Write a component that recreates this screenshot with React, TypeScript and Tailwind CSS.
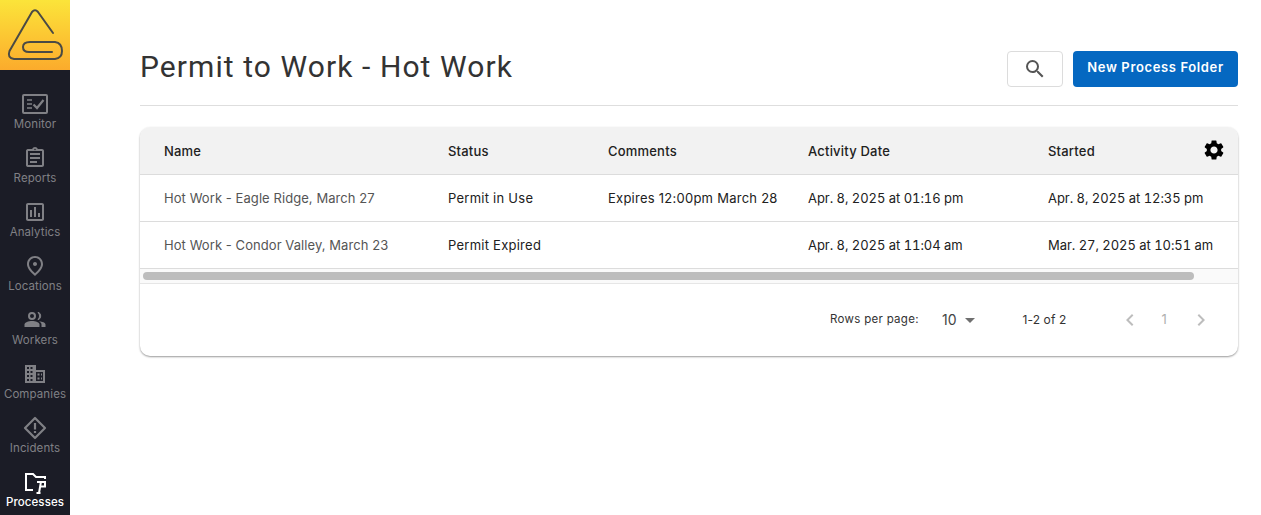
import { MdSettings, MdSearch, MdArrowDropDown, MdChevronLeft, MdChevronRight, MdOutlineAssignment, MdOutlineAssessment, MdOutlinePlace } from "react-icons/md";

const font = "font-['Inter','Roboto',sans-serif]";

function MonitorIcon() {
  return (
    <svg width="26" height="20" viewBox="0 0 26 20" fill="none" stroke="currentColor" className="shrink-0">
      <rect x="1" y="1" width="24" height="18" rx="1" strokeWidth="2" />
      <path d="M5 6h5M5 10h5M5 14h5" strokeWidth="1.6" />
      <path d="M11.5 10.5l3.5 3.5 6.5-8" strokeWidth="2.2" />
    </svg>
  );
}

function WorkersIcon() {
  return (
    <svg width="24" height="24" viewBox="0 0 24 24" fill="currentColor">
      <circle cx="9" cy="8" r="3" fill="none" stroke="currentColor" strokeWidth="2" />
      <path d="M15 4.2a4 4 0 0 1 0 7.6 6 6 0 0 0 0-7.6Z" stroke="currentColor" strokeWidth="1" />
      <path d="M1.5 19v-2.5C1.5 14.5 5.5 13 9 13s7.5 1.500 7.500 3.500V19Z" />
      <path d="M16 13.200c3.500.4 6.500 1.500 6.500 3.300V19h-4v-2.500c0-1.300-1-2.500-2.500-3.300Z" />
    </svg>
  );
}

function CompaniesIcon() {
  return (
    <svg width="24" height="24" viewBox="0 0 24 24" fill="currentColor">
      <path fillRule="evenodd" d="M2 3h11v18H2ZM4 5v2h2V5Zm3.500 0v2h2V5ZM4 9v2h2V9Zm3.500 0v2h2V9ZM4 13v2h2v-2Zm3.500 0v2h2v-2ZM4 17v2h2v-2Zm3.500 0v2h2v-2Z" />
      <path fillRule="evenodd" d="M13 8h9v13h-9v-2h7v-9h-7Z" />
      <path d="M14.500 11.500h2v2h-2ZM14.500 15.500h2v2h-2ZM18 11.500h1v2h-1ZM18 15.500h1v2h-1Z" />
    </svg>
  );
}

function IncidentIcon() {
  return (
    <svg width="24" height="24" viewBox="0 0 24 24" fill="none" stroke="currentColor">
      <path d="M12 2 22 12 12 22 2 12Z" strokeWidth="2.2" strokeLinejoin="round" />
      <path d="M12 7v6.500M12 15v2" strokeWidth="2.2" />
    </svg>
  );
}

function ProcessIcon() {
  return (
    <svg width="24" height="24" viewBox="0 0 24 24" fill="none" stroke="currentColor" strokeWidth="2">
      <path d="M10 20H3V4h7l3 3h9v2" />
      <path d="M14 12h8v4.500h-4.500" />
      <path d="M18 11.500l-2 11.500M13.500 23h4" />
    </svg>
  );
}

const nav = [
  { label: "Monitor", icon: <MonitorIcon /> },
  { label: "Reports", icon: <MdOutlineAssignment size={24} /> },
  { label: "Analytics", icon: <MdOutlineAssessment size={24} /> },
  { label: "Locations", icon: <MdOutlinePlace size={24} /> },
  { label: "Workers", icon: <WorkersIcon /> },
  { label: "Companies", icon: <CompaniesIcon /> },
  { label: "Incidents", icon: <IncidentIcon /> },
  { label: "Processes", icon: <ProcessIcon />, active: true },
];

const rows = [
  ["Hot Work - Eagle Ridge, March 27", "Permit in Use", "Expires 12:00pm March 28", "Apr. 8, 2025 at 01:16 pm", "Apr. 8, 2025 at 12:35 pm"],
  ["Hot Work - Condor Valley, March 23", "Permit Expired", "", "Apr. 8, 2025 at 11:04 am", "Mar. 27, 2025 at 10:51 am"],
];

const cols = "grid grid-cols-[284px_160px_200px_240px_1fr] items-center pl-6 pt-[2px]";

export default function App() {
  return (
    <div className={`${font} flex h-[515px] w-[1261px] overflow-hidden bg-white`}>
      <aside className="w-[70px] shrink-0 bg-[#1b1c26]">
        <div className="h-[70px] bg-gradient-to-b from-[#fbe43a] to-[#fbab2c]">
          <svg width="70" height="70" viewBox="0 0 70 70" fill="none" stroke="#4a4a45" strokeWidth="2" strokeLinecap="round" strokeLinejoin="round">
            <path d="M53 33 38 12Q35 8.500 32 12L9.500 51Q7 58 14 59H55Q62 58 62 51Q62 43 55 42H30Q23 42 23 47Q23 52 29 52H52" />
          </svg>
        </div>
        <nav className="pt-[22px]">
          {nav.map((n) => (
            <div key={n.label} className={`flex h-[54px] flex-col items-center ${n.active ? "text-white" : "text-[#808085]"}`}>
              <div className="flex h-[24px] w-[24px] items-center justify-center">{n.icon}</div>
              <span className={`text-[11.5px] leading-[16px] tracking-[0.1px] ${n.active ? "font-medium" : ""}`}>{n.label}</span>
            </div>
          ))}
        </nav>
      </aside>

      <main className="flex-1 pl-[70px] pr-[23px]">
        <header className="flex h-[106px] items-start justify-between border-b border-[#dedede] pt-[51px]">
          <h1 className="text-[30px] font-normal leading-[32px] tracking-[1.08px] text-[#333333] font-['Roboto',sans-serif]">Permit to Work - Hot Work</h1>
          <div className="flex gap-[10px]">
            <button className="flex h-[36px] w-[56px] items-center justify-center rounded-[4px] border border-[#dcdcdc] text-[#555555]">
              <MdSearch size={24} />
            </button>
            <button className="h-[36px] w-[165px] rounded-[4px] bg-[#0568c1] pb-[2px] text-[13px] font-semibold tracking-[0.63px] text-white">New Process Folder</button>
          </div>
        </header>

        <section className="relative mt-[21px] h-[229px] overflow-hidden rounded-[10px] shadow-[0_1px_2px_rgba(0,0,0,0.4)]">
          <div className={`${cols} h-[48px] border-b border-[#dcdcdc] bg-[#f2f2f2] text-[13px] font-medium tracking-[0.2px] text-[#212121]`}>
            {["Name", "Status", "Comments", "Activity Date", "Started"].map((h) => (
              <div key={h}>{h}</div>
            ))}
          </div>
          <MdSettings size={24} className="absolute right-[12px] top-[11px] text-black" />
          {rows.map((r, i) => (
            <div key={i} className={`${cols} h-[47px] border-b border-[#dcdcdc] text-[13px] tracking-[0.25px] text-[#212121]`}>
              {r.map((c, j) => (
                <div key={j} className={j === 0 ? "tracking-[0.07px] text-[#555555]" : j > 2 ? "tracking-[-0.05px] tabular-nums" : ""}>{c}</div>
              ))}
            </div>
          ))}
          <div className="flex h-[15px] items-center border-b border-[#e6e6e6] bg-[#fafafa] px-[3px]">
            <div className="h-[8px] w-[1051px] rounded-full bg-[#bdbdbd]" />
          </div>
          <div className="flex h-[71px] items-center pl-[690px] text-[#333333]">
            <span className="w-[112px] text-[11.5px] tracking-[0.3px]">Rows per page:</span>
            <span className="text-[14px] text-[#444444]">10</span>
            <MdArrowDropDown size={24} className="ml-[1px] text-[#6f6f6f]" />
            <span className="ml-[41px] w-[53px] text-[12px] tracking-[0.1px]">1-2 of 2</span>
            <MdChevronLeft size={24} className="ml-[42px] text-[#bdbdbd]" />
            <span className="ml-[20px] w-[12px] text-[13px] text-[#b0b0b0]">1</span>
            <MdChevronRight size={24} className="ml-[15px] text-[#bdbdbd]" />
          </div>
        </section>
      </main>
    </div>
  );
}
